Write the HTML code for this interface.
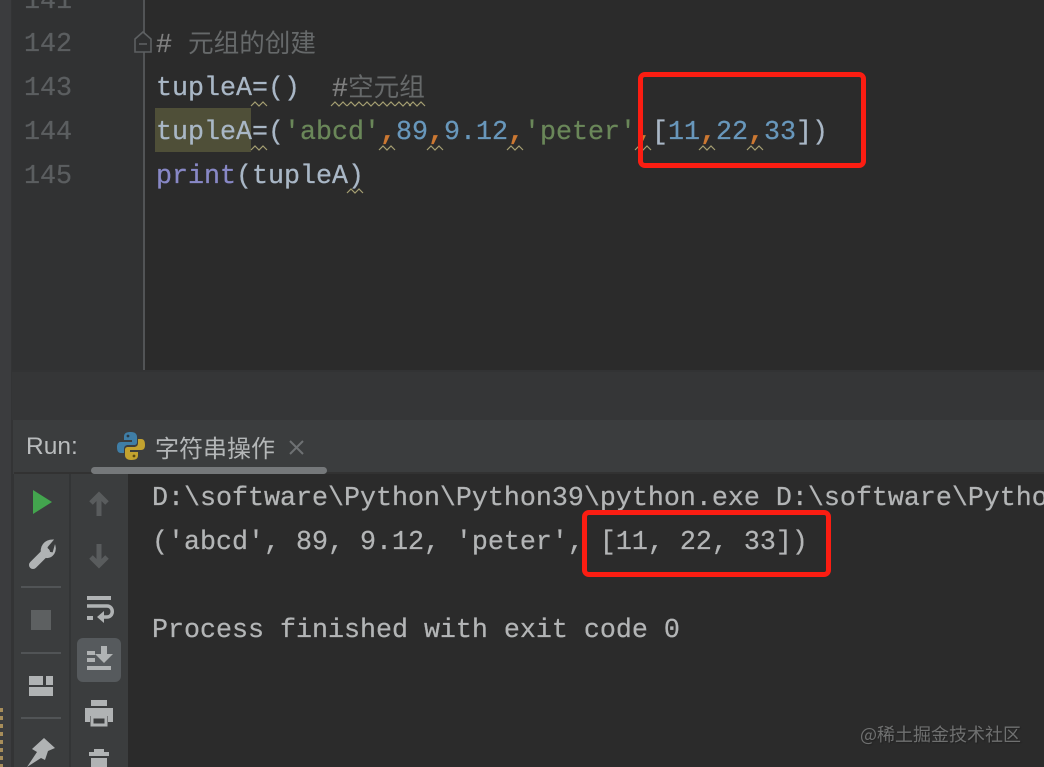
<!DOCTYPE html>
<html><head><meta charset="utf-8"><style>
html,body{margin:0;padding:0;background:#2b2b2b}
#p{position:relative;width:1044px;height:767px;overflow:hidden;background:#2b2b2b}
.a{position:absolute}
.t{position:absolute;white-space:pre;font-family:"Liberation Mono","Noto Sans CJK SC",monospace;font-size:26.67px;line-height:44px;height:44px;color:#a9b7c6;-webkit-text-stroke:.25px currentColor}
.n{color:#5b5e60;left:24px}
.cn{font-family:"Noto Sans CJK SC",sans-serif;font-size:25.6px;color:#66696a;-webkit-text-stroke:0}
.s{color:#6a8759}.b{color:#6897bb}.o{color:#cc7832;font-weight:bold}.p{color:#8888c6}
.c{color:#b3b5b6;left:152px;font-size:26.67px}
.u{font-family:"Noto Sans CJK SC",sans-serif;letter-spacing:0;-webkit-text-stroke:0}
</style></head><body><div id="p">
<div class="a" style="left:0;top:0;width:12px;height:767px;background:#3b3c3e"></div>
<div class="a" style="left:11px;top:0;width:3px;height:767px;background:#333435"></div>
<div class="a" style="left:12px;top:0;width:131px;height:370px;background:#313233"></div>
<div class="a" style="left:143px;top:0;width:2px;height:370px;background:#525456"></div>
<div class="a" style="left:12px;top:370px;width:1032px;height:50px;background:#353637;border-top:2px solid #323334;box-sizing:border-box"></div>
<div class="a" style="left:13px;top:420px;width:1031px;height:54px;background:#3b3d3e"></div>
<div class="a" style="left:14px;top:472px;width:1030px;height:2px;background:#323232"></div>
<div class="a" style="left:14px;top:474px;width:55px;height:293px;background:#3b3d3e"></div>
<div class="a" style="left:69px;top:474px;width:2px;height:293px;background:#333536"></div>
<div class="a" style="left:71px;top:474px;width:57px;height:293px;background:#3b3d3e"></div>
<div class="a" style="left:91px;top:467px;width:236px;height:7px;border-radius:4px;background:#75787a"></div>

<div class="t n" style="top:-20px">141</div>
<div class="t n" style="top:23px">142</div>
<div class="t n" style="top:67px">143</div>
<div class="t n" style="top:111px">144</div>
<div class="t n" style="top:155px">145</div>

<svg class="a" style="left:133px;top:29px" width="20" height="26" viewBox="0 0 20 26" fill="#2f3031" stroke="#5d6062" stroke-width="1.6"><path d="M2 23V10L10 3L18 10V23Z"/><path d="M6 15H14"/></svg>

<div class="a" style="left:155px;top:108px;width:96px;height:44px;background:#4f4f38"></div>

<div class="t" style="left:156px;top:20px;color:#808080">#<span class="cn" style="margin-left:16px">元组的创建</span></div>
<div class="t" style="left:156px;top:67px">tupleA=()</div>
<div class="t" style="left:332px;top:64px;color:#808080">#<span class="cn">空元组</span></div>
<div class="t" style="left:156px;top:111px">tupleA=(<span class="s">'abcd'</span><span class="o">,</span><span class="b">89</span><span class="o">,</span><span class="b">9.12</span><span class="o">,</span><span class="s">'peter'</span><span class="o">,</span>[<span class="b">11</span><span class="o">,</span><span class="b">22</span><span class="o">,</span><span class="b">33</span>])</div>
<div class="t" style="left:156px;top:155px"><span class="p">print</span>(tupleA)</div>

<svg class="a" style="left:0;top:0" width="1044" height="210" fill="none" stroke="#a59f72" stroke-width="1.2">
<defs><path id="w" d="M0 5L4 1L8 5L12 1L16 5"/></defs>
<use href="#w" x="251" y="101"/>
<use href="#w" x="331" y="101"/><use href="#w" x="347" y="101"/><use href="#w" x="363" y="101"/><use href="#w" x="379" y="101"/><use href="#w" x="395" y="101"/><use href="#w" x="409" y="101"/>
<use href="#w" x="251" y="145"/><use href="#w" x="379" y="145"/><use href="#w" x="427" y="145"/><use href="#w" x="507" y="145"/><use href="#w" x="635" y="145"/><use href="#w" x="699" y="145"/><use href="#w" x="747" y="145"/>
<use href="#w" x="347" y="188"/>
</svg>

<div class="a" style="left:638px;top:72px;width:228px;height:96px;box-sizing:border-box;border:5px solid #fb1d12;border-radius:7px"></div>

<div class="t" style="left:26px;top:425px;font-family:'Liberation Sans',sans-serif;font-size:24.500px;-webkit-text-stroke:0;color:#b9bcbd">Run:</div>
<svg class="a" style="left:116px;top:431px" width="30" height="30" viewBox="0 0 30 30">
<path d="M15 1C9 1 8 3 8 6V9H16V11H5C2 11 1 13 1 16C1 20 2 22 5 22H8V18C8 15 10 14 12 14H18C20 14 21 13 21 11V6C21 3 19 1 15 1Z" fill="#3f7ea6"/>
<path d="M15 29C21 29 22 27 22 24V21H14V19H25C28 19 29 17 29 14C29 10 28 8 25 8H22V12C22 15 20 16 18 16H12C10 16 9 17 9 19V24C9 27 11 29 15 29Z" fill="#c2a22f"/>
<circle cx="12" cy="5" r="1.4" fill="#2b3a44"/><circle cx="18" cy="25" r="1.4" fill="#5a4a12"/></svg>
<div class="t u" style="left:155px;top:425px;font-size:24px;color:#b4b7b8">字符串操作</div>
<svg class="a" style="left:288px;top:439px" width="17" height="17" stroke="#6e7173" stroke-width="2"><path d="M2 2L15 15M15 2L2 15"/></svg>

<svg class="a" style="left:0;top:474px" width="128" height="293" viewBox="0 474 128 293">
<path d="M33 490V514L52 502Z" fill="#43a54e"/>
<path d="M33 565L46 552" stroke="#b0b3b4" stroke-width="8" stroke-linecap="round"/>
<path d="M42 556C39 546 45 540 53 540L47 547L48 552L53 553L55 546C57 553 50 561 42 556Z" fill="#b0b3b4" stroke="#b0b3b4" stroke-width="1"/>
<g stroke="#595c5d" stroke-width="5" fill="none"><path d="M99 516V495M91 503L99 495L107 503"/><path d="M99 544V565M91 557L99 565L107 557"/></g>
<path d="M21 587H61M21 653H61M21 718H61" stroke="#515456" stroke-width="2"/>
<rect x="31" y="610" width="20" height="20" fill="#5d6061"/>
<path d="M29 676H43V685H29ZM46 676H53V685H46ZM29 687H53V696H29Z" fill="#b0b3b4"/>
<path d="M87 596H111V600H87ZM87 616H93V620H87Z" fill="#b0b3b4"/>
<path d="M87 606H107C114 606 114 617 107 617H101" stroke="#b0b3b4" stroke-width="3.500" fill="none"/><path d="M104 611L97 617L104 623Z" fill="#b0b3b4"/>
<rect x="77" y="638" width="44" height="44" rx="6" fill="#565a5d"/>
<path d="M87 651H95V655H87ZM87 658H95V662H87ZM87 666H111V670H87ZM101 646H107V654H113L104 663L95 654H101Z" fill="#b0b3b4"/>
<path d="M91 700H107V706H91ZM85 708H113V722H108V716H90V722H85Z" fill="#b0b3b4"/><path d="M92 717H106V725H92Z" stroke="#b0b3b4" stroke-width="3" fill="none"/>
<path d="M89 752H109V756H89ZM94 749H104V752H94ZM91 758H107V767H91Z" fill="#b0b3b4"/>
<path d="M27 767L37 752L32 749L44 738L55 748L48 751L45 760L41 758Z" fill="#b0b3b4"/>
</svg>

<div class="a" style="left:0;top:708px;width:3px;height:59px;background:repeating-linear-gradient(#a78d5a 0 4px,#3b3c3e 4px 8px)"></div>

<div class="t c" style="top:477px">D:\software\Python\Python39\python.exe D:\software\Python\Python39</div>
<div class="t c" style="top:521px">('abcd', 89, 9.12, 'peter', [11, 22, 33])</div>
<div class="t c" style="top:609px">Process finished with exit code 0</div>

<div class="a" style="left:582px;top:510px;width:249px;height:67px;box-sizing:border-box;border:5px solid #fb1d12;border-radius:7px"></div>

<div class="t u" style="left:860px;top:712px;font-size:18px;color:#6f7070;text-shadow:1px 1px 1px #222">@稀土掘金技术社区</div>
</div></body></html>
